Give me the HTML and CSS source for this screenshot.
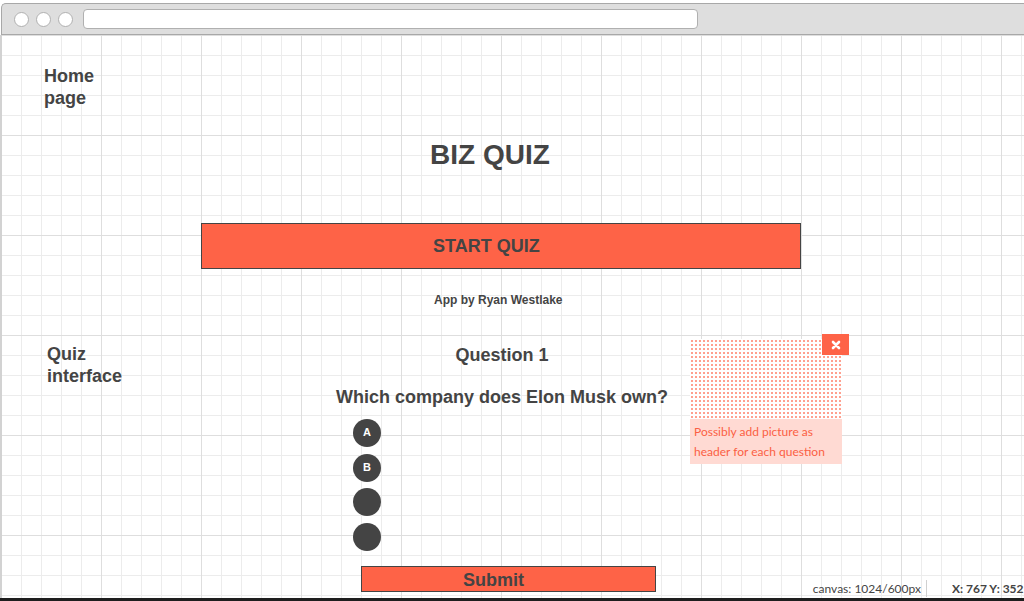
FILE: index.html
```html
<!DOCTYPE html>
<html lang="en">
<head>
<meta charset="utf-8">
<title>BIZ QUIZ wireframe</title>
<link rel="stylesheet" href="styles.css">
</head>
<body>
<div class="window">
  <div class="chrome">
    <span class="light"></span>
    <span class="light"></span>
    <span class="light"></span>
    <div class="address"></div>
  </div>
  <div class="canvas">
    <section class="home">
      <div class="label">Home<br>page</div>
      <h1 class="title">BIZ QUIZ</h1>
      <div class="start-btn">START QUIZ</div>
      <p class="credit">App by Ryan Westlake</p>
    </section>

    <section class="quiz">
      <div class="label quiz-label">Quiz<br>interface</div>
      <div class="quiz-col">
        <h2 class="q-num">Question 1</h2>
        <h3 class="q-text">Which company does Elon Musk own?</h3>
        <ul class="options">
          <li class="opt">A</li>
          <li class="opt">B</li>
          <li class="opt"></li>
          <li class="opt"></li>
        </ul>
        <div class="submit-btn">Submit</div>
      </div>
    </section>

    <div class="note">
      <svg class="note-pic" width="152" height="80" viewBox="0 0 152 80">
        <defs>
          <pattern id="dots" width="4" height="4" patternUnits="userSpaceOnUse">
            <rect x="1" y="1" width="2" height="2" fill="#ffb2a4"/>
            <rect x="1.5" y="1.5" width="1" height="1" fill="#ff6a50"/>
          </pattern>
        </defs>
        <rect width="152" height="80" fill="url(#dots)"/>
      </svg>
      <div class="note-text">Possibly add picture as<br>header for each question</div>
      <span class="note-close">
        <svg width="10" height="10" viewBox="0 0 10 10"><path d="M2 2 L8 8 M8 2 L2 8" stroke="#fff" stroke-width="2.6" stroke-linecap="round"/></svg>
      </span>
    </div>

    <div class="status">
      <span class="status-canvas">canvas: 1024/600px</span>
      <span class="status-sep"></span>
      <span class="status-xy">X: 767 Y: 352</span>
    </div>
  </div>
</div>
</body>
</html>
```

FILE: styles.css
```css
* { box-sizing: border-box; }
html, body { margin: 0; padding: 0; }
body {
  background: #1e1e1e;
  width: 1024px;
  height: 601px;
  overflow: hidden;
  font-family: "Liberation Sans", Arial, sans-serif;
  color: #444;
}
.window {
  height: 598px;
  background: #fff;
  overflow: hidden;
  position: relative;
}
.chrome {
  height: 32px;
  margin-top: 3px;
  margin-left: 1px;
  background: #dedede;
  border: 1px solid #a8a8a8;
  border-right: none;
  border-radius: 5px 0 0 0;
  display: flex;
  align-items: center;
  padding-left: 12px;
}
.light {
  width: 15px;
  height: 15px;
  border-radius: 50%;
  background: #fff;
  border: 1px solid #b0b0b0;
  margin-right: 7px;
}
.address {
  margin-left: 3px;
  width: 615px;
  height: 20px;
  background: #fff;
  border: 1px solid #b0b0b0;
  border-radius: 4px;
}
.canvas {
  position: relative;
  height: 563px;
  border-left: 2px solid #d2d2d2;
  background-color: #fff;
  background-image:
    linear-gradient(to right, #dedede 1px, transparent 1px),
    linear-gradient(to bottom, #dedede 1px, transparent 1px),
    linear-gradient(to right, #ececec 1px, transparent 1px),
    linear-gradient(to bottom, #ececec 1px, transparent 1px);
  background-size: 100px 100px, 100px 100px, 20px 20px, 20px 20px;
  background-position: 99px 0, 0 0, 19px 0, 0 0;
}
.label {
  font-size: 18px;
  line-height: 21.5px;
  font-weight: bold;
  color: #444;
}
.home {
  padding-top: 31px;
}
.home .label {
  margin-left: 42px;
}
.title {
  margin: 30px 0 0;
  padding-left: 428px;
  font-size: 28px;
  line-height: 32px;
  font-weight: bold;
  color: #444;
}
.start-btn {
  margin: 52px 0 0 199px;
  width: 600px;
  height: 46px;
  background: #fe6347;
  border: 1px solid #444;
  font-size: 18px;
  line-height: 44px;
  font-weight: bold;
  color: #444;
  padding-left: 231px;
}
.credit {
  margin: 23px 0 0;
  padding-left: 432px;
  font-size: 12px;
  line-height: 16px;
  font-weight: bold;
  color: #444;
}
.quiz {
  margin-top: 36px;
  display: flex;
  align-items: flex-start;
}
.quiz-label {
  margin-left: 45px;
  width: 100px;
}
.quiz-col {
  margin-left: 189px;
  width: 332px;
  display: flex;
  flex-direction: column;
}
.q-num {
  margin: 0;
  text-align: center;
  font-size: 18px;
  line-height: 22px;
  font-weight: bold;
  color: #444;
}
.q-text {
  margin: 20px 0 0;
  text-align: center;
  font-size: 18px;
  line-height: 22px;
  font-weight: bold;
  color: #444;
  white-space: nowrap;
}
.options {
  list-style: none;
  margin: 11px 0 0 17px;
  padding: 0;
  display: flex;
  flex-direction: column;
  gap: 6.5px;
}
.opt {
  width: 28px;
  height: 28px;
  border-radius: 50%;
  background: #444;
  color: #fff;
  font-size: 11px;
  font-weight: bold;
  display: flex;
  align-items: center;
  justify-content: center;
  padding-bottom: 2px;
}
.submit-btn {
  margin: 15px 0 0 25px;
  width: 295px;
  height: 26px;
  background: #fe6347;
  border: 1px solid #444;
  font-size: 18px;
  line-height: 26px;
  font-weight: bold;
  color: #444;
  padding-left: 101px;
}
.note {
  position: absolute;
  left: 688px;
  top: 304px;
  width: 152px;
}
.note-pic {
  display: block;
  width: 152px;
  height: 80px;
  background: #fff;
}
.note-text {
  height: 45px;
  background: #ffdad3;
  color: #fb5f43;
  font-family: Lato, "Liberation Sans", sans-serif;
  font-size: 12px;
  line-height: 20px;
  padding: 3px 0 0 4px;
}
.note-close {
  position: absolute;
  left: 132px;
  top: -5px;
  width: 27px;
  height: 21px;
  background: #fe6347;
  display: flex;
  align-items: center;
  justify-content: center;
}
.status {
  position: absolute;
  right: 0;
  bottom: 0;
  height: 20px;
  display: flex;
  align-items: center;
  font-family: Lato, "Liberation Sans", sans-serif;
  font-size: 12px;
  color: #444;
  white-space: nowrap;
}
.status-canvas {
  margin-right: 5px;
}
.status-sep {
  width: 1px;
  height: 17px;
  background: #d0d0d0;
  margin-right: 25px;
}
.status-xy {
  font-weight: bold;
  width: 72px;
  overflow: hidden;
}
```
